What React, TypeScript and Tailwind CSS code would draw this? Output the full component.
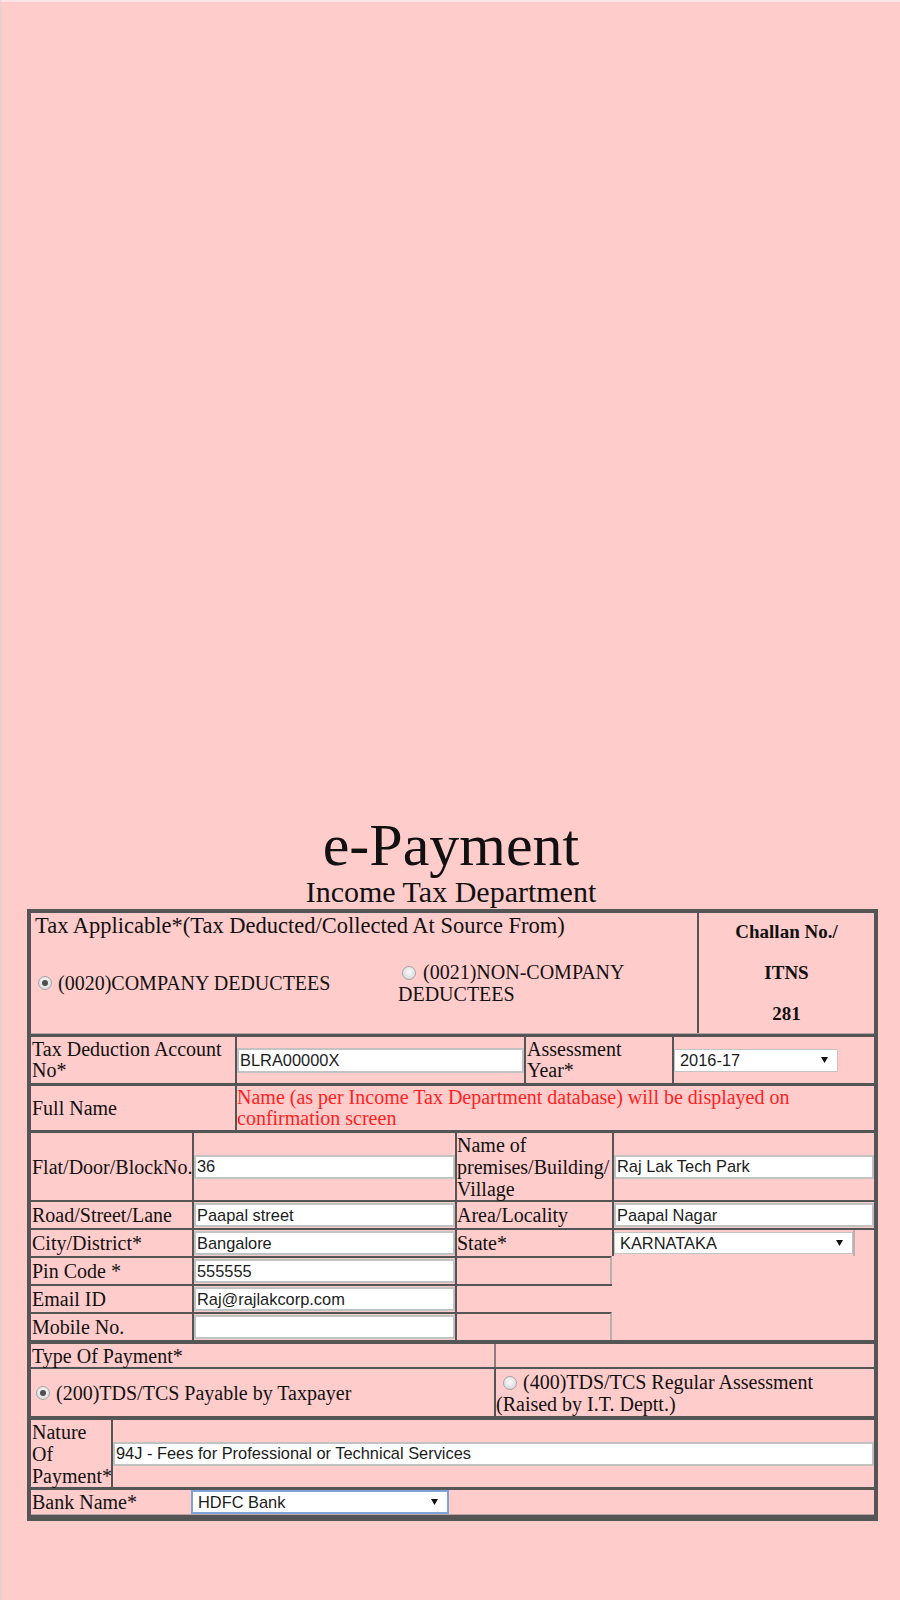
import React from "react";

const sans = "font-['Liberation_Sans',Arial,sans-serif]";

function Radio({ checked, className = "" }: { checked?: boolean; className?: string }) {
  return (
    <span
      className={`inline-flex w-[14px] h-[14px] shrink-0 rounded-full border border-[#a5a5a5] bg-[radial-gradient(circle_at_50%_40%,#fbfbfb_0%,#e0e0e0_65%,#c9c9c9_100%)] items-center justify-center align-[-1px] ${className}`}
    >
      {checked && <span className="w-[6px] h-[6px] rounded-full bg-[#4e4e4e]" />}
    </span>
  );
}

function TextBox({ value = "", className = "" }: { value?: string; className?: string }) {
  return (
    <input
      readOnly
      value={value}
      className={`block w-full h-[24px] bg-white border-2 border-[#c2c2c2] px-px text-[16.4px] text-[#1c1c1c] outline-none ${sans} ${className}`}
    />
  );
}

function Select({
  value,
  className = "",
  borderClass = "border border-[#c4c4c4]",
}: {
  value: string;
  className?: string;
  borderClass?: string;
}) {
  return (
    <div
      className={`flex items-center justify-between bg-white pl-[5px] pr-[9px] text-[16.4px] text-[#1c1c1c] ${sans} ${borderClass} ${className}`}
    >
      <span>{value}</span>
      <svg width="7" height="6" viewBox="0 0 7 6">
        <path d="M0 0H7L3.5 6Z" fill="#111" />
      </svg>
    </div>
  );
}

export default function App() {
  return (
    <div className="min-h-[1600px] bg-[#ffcccc] border-t-2 border-l-2 border-t-[#fde4e4] border-l-[#e9cfcf] pt-[813px] font-['Liberation_Serif','Times_New_Roman',serif] text-[#111]">
      <h1 className="text-center text-[60px] leading-[60px]">e-Payment</h1>
      <h2 className="mt-[2px] text-center text-[30px] leading-[30px]">Income Tax Department</h2>

      <div className="mt-[2px] ml-[25px] w-[851px] border-4 border-b-[6px] border-[#555] text-[20px]">
        {/* tax applicable */}
        <div className="flex h-[121px] border-b border-[#b7a3a3]">
          <div className="w-[666px] flex flex-col">
            <div className="h-[25px] pl-[4px] text-[22.5px] leading-[25px] whitespace-nowrap">
              Tax Applicable*(Tax Deducted/Collected At Source From)
            </div>
            <div className="flex h-[90px] items-center">
              <div className="w-[367px] pl-[7px] flex items-center gap-[6px]">
                <Radio checked />
                <span>(0020)COMPANY DEDUCTEES</span>
              </div>
              <div className="flex-1 leading-[22px]">
                <Radio className="ml-[4px] mr-[7px]" />
                (0021)NON-COMPANY DEDUCTEES
              </div>
            </div>
          </div>
          <div className="w-[177px] border-l-2 border-[#555] flex flex-col items-center justify-center gap-[21px] text-[19px] leading-[20px] font-bold">
            <span>Challan No./</span>
            <span>ITNS</span>
            <span>281</span>
          </div>
        </div>

        {/* TAN / name */}
        <div className="border-t-[3px] border-[#555]">
          <div className="flex h-[46px]">
            <div className="w-[204px] pl-px flex items-center leading-[21px]">
              <div>
                Tax Deduction Account
                <br />
                No*
              </div>
            </div>
            <div className="w-[289px] border-l-2 border-[#555] flex items-center">
              <TextBox value="BLRA00000X" className="h-[25px]" />
            </div>
            <div className="w-[148px] border-l-2 border-[#555] pl-px flex items-center leading-[21px]">
              <div>
                Assessment
                <br />
                Year*
              </div>
            </div>
            <div className="w-[202px] border-l-2 border-[#555] flex items-center">
              <Select value="2016-17" className="w-[164px] h-[23px]" />
            </div>
          </div>
          <div className="flex h-[47px] border-t-[3px] border-[#555]">
            <div className="w-[204px] pl-px flex items-center">Full Name</div>
            <div className="flex-1 border-l-2 border-[#555] flex items-center leading-[21px] text-[#ff1f1f]">
              Name (as per Income Tax Department database) will be displayed on confirmation screen
            </div>
          </div>
        </div>

        {/* address */}
        <div className="border-t-[3px] border-[#555]">
          <div className="flex h-[67px]">
            <div className="w-[161px] pl-px flex items-center">Flat/Door/BlockNo.</div>
            <div className="w-[263px] border-l-2 border-[#555] flex items-center">
              <TextBox value="36" />
            </div>
            <div className="w-[157px] border-l-2 border-[#555] flex items-center leading-[22px] whitespace-nowrap">
              <div>
                Name of
                <br />
                premises/Building/
                <br />
                Village
              </div>
            </div>
            <div className="w-[262px] border-l-2 border-[#555] flex items-center">
              <TextBox value="Raj Lak Tech Park" className="h-[23px]" />
            </div>
          </div>

          <div className="flex h-[28px] border-t-2 border-[#555]">
            <div className="w-[161px] pl-px flex items-center">Road/Street/Lane</div>
            <div className="w-[263px] border-l-2 border-[#555] flex items-center">
              <TextBox value="Paapal street" />
            </div>
            <div className="w-[157px] border-l-2 border-[#555] flex items-center">Area/Locality</div>
            <div className="w-[262px] border-l-2 border-[#555] flex items-center">
              <TextBox value="Paapal Nagar" />
            </div>
          </div>

          <div className="flex h-[28px] border-t-2 border-[#555]">
            <div className="w-[161px] pl-px flex items-center">City/District*</div>
            <div className="w-[263px] border-l-2 border-[#555] flex items-center">
              <TextBox value="Bangalore" />
            </div>
            <div className="w-[157px] border-l-2 border-[#555] flex items-center">State*</div>
            <div className="w-[241px] border-l-2 border-[#555] flex items-center">
              <Select value="KARNATAKA" className="w-full h-[22px] pr-[8px]" />
            </div>
            <div className="w-[21px] border-l-2 border-[#bdb0b0]" />
          </div>

          <div className="flex h-[28px]">
            <div className="w-[161px] pl-px flex items-center border-t-2 border-[#555]">Pin Code *</div>
            <div className="w-[263px] border-l-2 border-t-2 border-[#555] flex items-center">
              <TextBox value="555555" />
            </div>
            <div className="w-[157px] border-l-2 border-t-2 border-[#555] border-r-2 border-r-[#bcaeae]" />
          </div>

          <div className="flex h-[28px]">
            <div className="w-[161px] pl-px flex items-center border-t-2 border-[#555]">Email ID</div>
            <div className="w-[263px] border-l-2 border-t-2 border-[#555] flex items-center">
              <TextBox value="Raj@rajlakcorp.com" />
            </div>
            <div className="w-[157px] border-l-2 border-t-2 border-[#555]" />
          </div>

          <div className="flex h-[28px]">
            <div className="w-[161px] pl-px flex items-center border-t-2 border-[#555]">Mobile No.</div>
            <div className="w-[263px] border-l-2 border-t-2 border-[#555] flex items-center">
              <TextBox />
            </div>
            <div className="w-[157px] border-l-2 border-t-2 border-[#555] border-r-2 border-r-[#bcaeae]" />
          </div>
        </div>

        {/* type of payment */}
        <div className="border-t-4 border-[#555]">
          <div className="flex h-[23px]">
            <div className="w-[463px] pl-px flex items-center">Type Of Payment*</div>
            <div className="flex-1 border-l-2 border-[#8a8080]" />
          </div>
          <div className="flex h-[49px] border-t-2 border-[#555]">
            <div className="w-[463px] pl-[5px] flex items-center gap-[6px]">
              <Radio checked />
              <span>(200)TDS/TCS Payable by Taxpayer</span>
            </div>
            <div className="flex-1 border-l-2 border-[#555] flex items-center leading-[22px]">
              <div>
                <Radio className="ml-[7px] mr-[6px]" />
                (400)TDS/TCS Regular Assessment (Raised by I.T. Deptt.)
              </div>
            </div>
          </div>
        </div>

        {/* nature / bank */}
        <div className="border-t-4 border-[#555]">
          <div className="flex h-[67px]">
            <div className="w-[80px] pl-px flex items-center leading-[22px]">
              <div>
                Nature
                <br />
                Of
                <br />
                Payment*
              </div>
            </div>
            <div className="flex-1 border-l-2 border-[#555] flex items-center">
              <TextBox value="94J - Fees for Professional or Technical Services" className="h-[23px]" />
            </div>
          </div>
          <div className="flex h-[28px] items-center border-t-[3px] border-[#555] border-b border-b-[#b7a3a3]">
            <div className="w-[160px] pl-px">Bank Name*</div>
            <Select
              value="HDFC Bank"
              className="w-[258px] h-[24px]"
              borderClass="border-2 border-[#7fa3d8]"
            />
          </div>
        </div>
      </div>
    </div>
  );
}
